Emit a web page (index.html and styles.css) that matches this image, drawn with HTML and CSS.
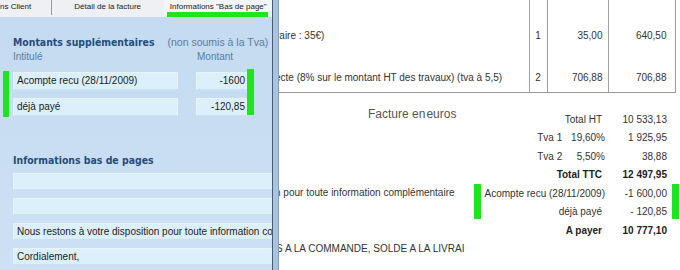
FILE: index.html
```html
<!DOCTYPE html>
<html lang="fr">

<head>
    <meta charset="UTF-8">
    <title>Facture - Informations bas de page</title>
    <link rel="stylesheet" href="styles.css">
</head>

<body>
    <div class="screen">
        <div class="panel">
            <div class="tabs">
                <div class="tab tab-first">ns Client</div>
                <div class="tab tab-middle">Détail de la facture</div>
                <div class="tab tab-active">Informations "Bas de page"</div>
            </div>
            <div class="panel-body">
                <div class="section-head">
                    <h2>Montants supplémentaires</h2>
                    <span class="note">(non soumis à la Tva)</span>
                </div>
                <div class="col-heads">
                    <span class="col-label">Intitulé</span>
                    <span class="col-amount">Montant</span>
                </div>
                <div class="amounts">
                    <div class="mark mark-left"></div>
                    <div class="amount-rows">
                        <div class="amount-row">
                            <div class="field field-label">Acompte recu (28/11/2009)</div>
                            <div class="field field-num">-1600</div>
                        </div>
                        <div class="amount-row">
                            <div class="field field-label">déjà payé</div>
                            <div class="field field-num">-120,85</div>
                        </div>
                    </div>
                    <div class="mark mark-right"></div>
                </div>
                <h2 class="footer-head">Informations bas de pages</h2>
                <div class="footer-fields">
                    <div class="field field-wide"></div>
                    <div class="field field-wide"></div>
                    <div class="field field-wide">Nous restons à votre disposition pour toute information complémentaire</div>
                    <div class="field field-wide">Cordialement,</div>
                </div>
            </div>
        </div>

        <div class="frame"></div>

        <div class="doc">
            <table class="lines">
                <tr class="line-first">
                    <td class="c-desc"><span class="cut cut-1">raire : 35€)</span></td>
                    <td class="c-qty">1</td>
                    <td class="c-price">35,00</td>
                    <td class="c-total">640,50</td>
                </tr>
                <tr class="line-second">
                    <td class="c-desc"><span class="cut cut-2">ecte (8% sur le montant HT des travaux) (tva à 5,5)</span></td>
                    <td class="c-qty">2</td>
                    <td class="c-price">706,88</td>
                    <td class="c-total">706,88</td>
                </tr>
            </table>

            <div class="bottom">
                <div class="notes">
                    <div class="currency">Facture <span class="tight">en</span>euros</div>
                    <div class="note-line note-a"><span class="cut cut-3">n pour toute information complémentaire</span></div>
                    <div class="note-line note-b"><span class="cut cut-4">S A LA COMMANDE, SOLDE A LA LIVRAI</span></div>
                </div>

                <div class="totals">
                    <div class="mark t-mark-left"></div>
                    <div class="mark t-mark-right"></div>

                    <div class="t-label">Total HT</div>
                    <div class="t-value">10 533,13</div>

                    <div class="t-label t-flush">Tva 1 <span class="rate">19,60%</span></div>
                    <div class="t-value">1 925,95</div>

                    <div class="t-label t-flush">Tva 2 <span class="rate">5,50%</span></div>
                    <div class="t-value">38,88</div>

                    <div class="t-label strong">Total TTC</div>
                    <div class="t-value strong">12 497,95</div>

                    <div class="t-label t-flush">Acompte recu (28/11/2009)</div>
                    <div class="t-value">-1 600,00</div>

                    <div class="t-label">déjà payé</div>
                    <div class="t-value">- 120,85</div>

                    <div class="t-label strong">A payer</div>
                    <div class="t-value strong">10 777,10</div>
                </div>
            </div>
        </div>
    </div>
</body>

</html>
```

FILE: styles.css
```css
body {
    margin: 0;
    background-color: #ffffff;
    font-family: "Liberation Sans", Arial, sans-serif;
}

.screen {
    display: flex;
    width: 680px;
    height: 270px;
    overflow: hidden;
}

/* left window */

.panel {
    width: 272px;
    flex-shrink: 0;
    display: flex;
    flex-direction: column;
    overflow: hidden;
    background: linear-gradient(#c3daf0, #cde1f4);
}

.tabs {
    display: flex;
    height: 17px;
    background-color: #eef0f3;
    font-size: 8px;
    color: #222;
}

.tab {
    padding-top: 2px;
    line-height: 9px;
    white-space: nowrap;
}

.tab-first {
    width: 51px;
    height: 13px;
    border-right: 1px solid #9a9a9a;
}

.tab-middle {
    width: 113px;
    text-align: center;
}

.tab-active {
    width: 103px;
    padding-left: 6px;
    background-color: #f4f5f6;
}

.tab-active::after {
    content: "";
    display: block;
    width: 101px;
    height: 5px;
    margin-top: 1px;
    margin-left: -3px;
    background-color: #1ee61e;
}

.panel-body {
    padding: 19px 0 0 13px;
}

h2 {
    margin: 0;
    font-family: "DejaVu Sans Condensed", "DejaVu Sans", sans-serif;
    font-stretch: condensed;
    font-size: 10.4px;
    font-weight: bold;
    line-height: 12px;
    color: #254d7e;
    white-space: nowrap;
}

.section-head {
    display: flex;
    align-items: center;
}

.note {
    margin-left: 13px;
    font-size: 10.5px;
    line-height: 12px;
    color: #5b7c9e;
    white-space: nowrap;
}

.col-heads {
    display: flex;
    margin-top: 3px;
    font-size: 10px;
    line-height: 12px;
    color: #5b7c9e;
}

.col-label {
    width: 184px;
}

.amounts {
    display: flex;
    margin: 6px 0 0 -10px;
}

.mark {
    background-color: #1ee61e;
}

.mark-left {
    width: 6px;
    height: 46px;
    margin-top: 2px;
    margin-right: 4px;
}

.mark-right {
    width: 7px;
    height: 46px;
}

.amount-rows {
    display: flex;
    flex-direction: column;
    gap: 8px;
    margin-top: 3px;
}

.amount-row {
    display: flex;
    gap: 18px;
}

.field {
    box-sizing: border-box;
    height: 18px;
    padding: 0 3px;
    font-size: 10px;
    line-height: 16px;
    color: #1c1c1c;
    white-space: nowrap;
    background-color: #dcf0fb;
    border: 1px solid #e6f4fc;
    border-bottom-color: #c9e0f2;
}

.field-label {
    width: 165px;
}

.field-num {
    width: 51px;
    padding-right: 1px;
    text-align: right;
}

.footer-head {
    margin-top: 37px;
}

.footer-fields {
    display: flex;
    flex-direction: column;
    gap: 8px;
    margin-top: 7px;
}

.field-wide {
    width: 290px;
    height: 17px;
    line-height: 15px;
}

/* window border */

.frame {
    width: 5px;
    flex-shrink: 0;
    background-color: #a7c4e4;
    border-left: 1px solid #4d5d70;
    border-right: 1px solid #8c9cb0;
}

/* invoice document */

.doc {
    flex: 1;
    overflow: hidden;
    font-size: 10px;
    color: #333;
}

.lines {
    border-collapse: collapse;
    table-layout: fixed;
    width: 396px;
}

.lines td {
    padding: 0;
    white-space: nowrap;
    line-height: 12px;
}

.line-first td {
    height: 64px;
    padding-top: 8px;
    box-sizing: border-box;
}

.line-second td {
    height: 28px;
    border-bottom: 1px solid #9a9a9a;
}

.c-desc {
    width: 250px;
    overflow: hidden;
}

.c-qty {
    width: 18px;
    text-align: center;
    border-left: 1px solid #a0a0a0;
}

.c-price {
    width: 61px;
    text-align: right;
    padding-right: 5px !important;
    border-left: 1px solid #a0a0a0;
}

.c-total {
    width: 67px;
    text-align: right;
    padding-right: 8px !important;
    border-left: 1px solid #a0a0a0;
    border-right: 1px solid #a0a0a0;
}

.cut {
    display: inline-block;
}

.cut-1 {
    margin-left: -3px;
}

.cut-2 {
    margin-left: -4px;
}

.cut-3 {
    margin-left: -4px;
}

.cut-4 {
    margin-left: -3px;
}

.bottom {
    display: flex;
}

.notes {
    width: 195px;
    flex-shrink: 0;
    white-space: nowrap;
}

.currency {
    margin: 14px 0 0 89px;
    font-size: 12px;
    line-height: 14px;
    color: #555;
}

.tight {
    margin-right: 1px;
}

.note-line {
    line-height: 14px;
}

.note-a {
    margin-top: 65px;
}

.note-b {
    margin-top: 42px;
}

.totals {
    display: grid;
    grid-template-columns: 7px 124px 62px 5px 7px;
    grid-auto-rows: 18.5px;
    align-items: center;
    margin-top: 17px;
    white-space: nowrap;
}

.t-mark-left {
    grid-column: 1;
    grid-row: 5 / span 2;
    align-self: stretch;
    margin-bottom: 2px;
}

.t-mark-right {
    grid-column: 5;
    grid-row: 5 / span 2;
    align-self: stretch;
    margin-bottom: 2px;
}

.t-label {
    grid-column: 2;
    text-align: right;
    padding-right: 3px;
}

.t-flush {
    padding-right: 0;
}

.t-value {
    grid-column: 3;
    text-align: right;
}

.rate {
    display: inline-block;
    width: 40px;
    text-align: right;
}

.strong {
    font-weight: bold;
    color: #222;
}
```
